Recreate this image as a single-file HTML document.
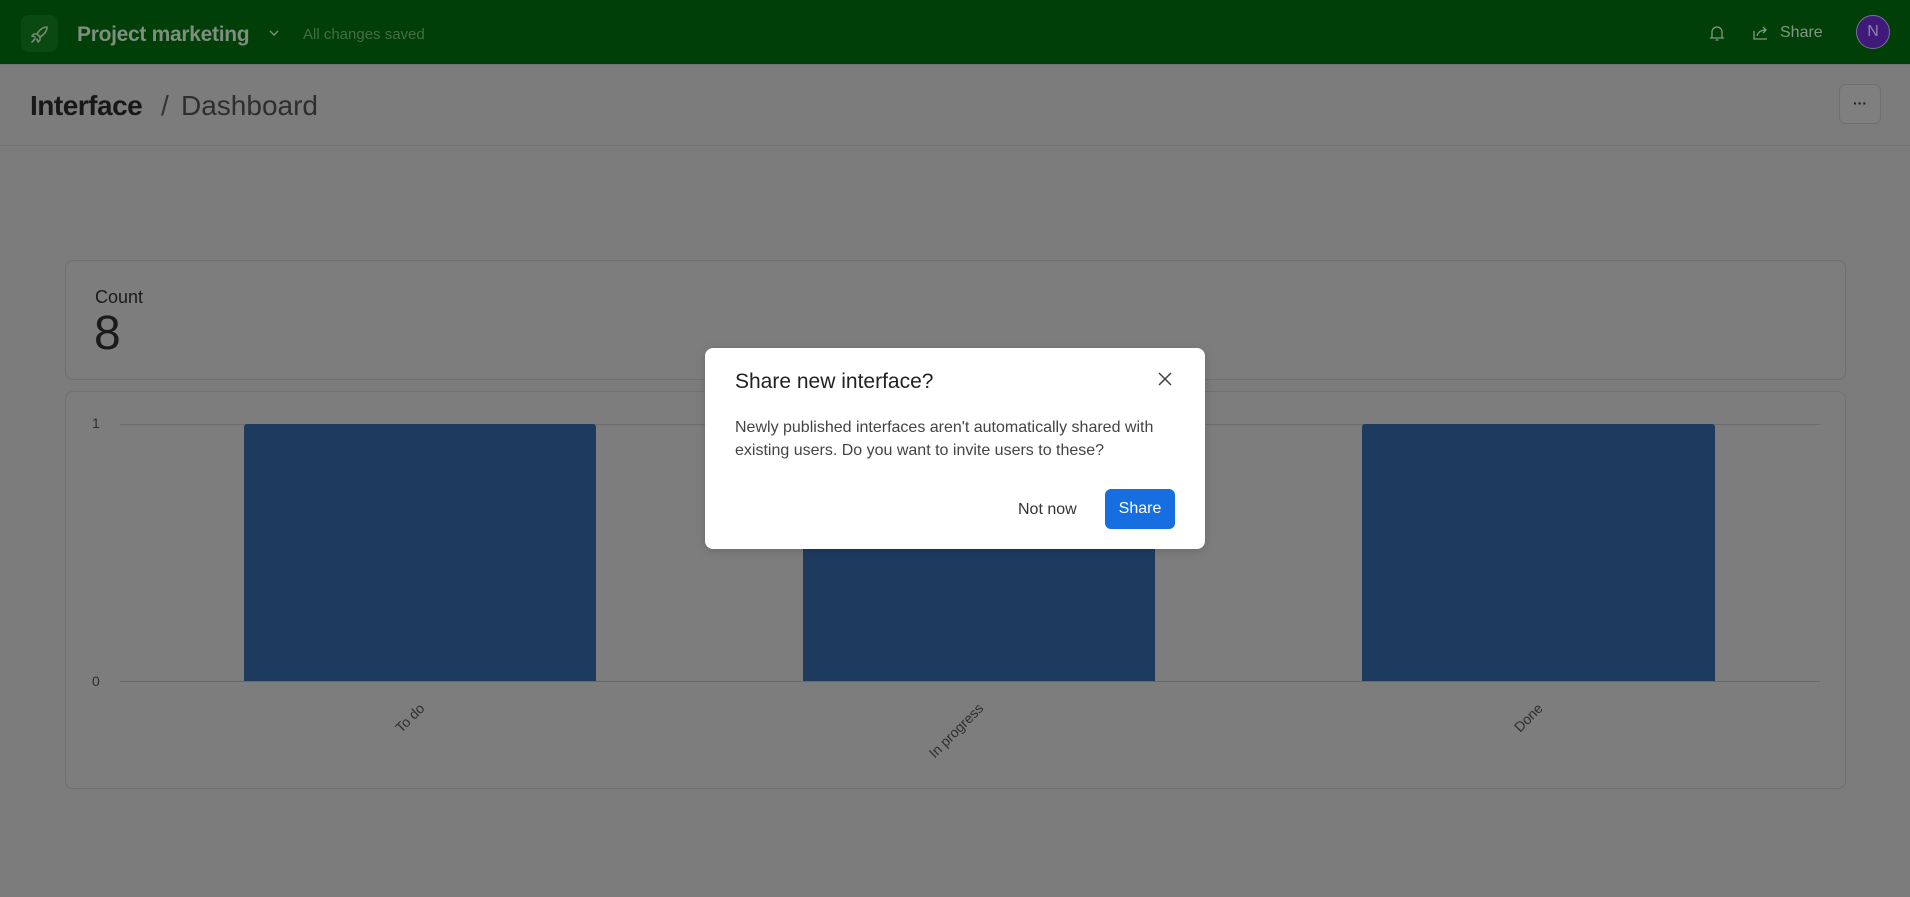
<!DOCTYPE html>
<html><head><meta charset="utf-8"><style>
*{box-sizing:border-box;margin:0;padding:0}
body{width:1910px;height:897px;overflow:hidden;background:#7c7c7c;font-family:"Liberation Sans",sans-serif;position:relative}
.abs{position:absolute}
#hdr{left:0;top:0;width:1910px;height:64px;background:#003f07}
.card{border:1px solid #707070;border-radius:8px;background:#7d7d7d}
</style></head><body>
<div id="hdr" class="abs">
  <div class="abs" style="left:21px;top:15px;width:37px;height:37px;border-radius:8px;background:#0b4912"></div>
  <svg class="abs" style="left:28px;top:22px" width="24" height="24" viewBox="0 0 24 24" fill="none" stroke="#728c72" stroke-width="1.6" stroke-linecap="round" stroke-linejoin="round"><path d="M19 5c-4 0-8 3-10 7l3 3c4-2 7-6 7-10z"/><path d="M9 12l-3 0-2 2 3 1M12 15v3l-2 2-1-3"/><path d="M7 17l-3 3"/></svg>
  <div class="abs" style="left:77px;top:23px;font-size:21px;font-weight:bold;color:#7f8e7f;letter-spacing:-0.3px">Project marketing</div>
  <svg class="abs" style="left:268px;top:29px" width="12" height="8" viewBox="0 0 12 8" fill="none" stroke="#7f8e7f" stroke-width="1.4"><path d="M2 2l4 4 4-4"/></svg>
  <div class="abs" style="left:303px;top:26px;font-size:15px;color:#456d45">All changes saved</div>
  <svg class="abs" style="left:1709px;top:24px" width="16" height="18" viewBox="0 0 16 18" fill="none" stroke="#839883" stroke-width="1.3"><path d="M3 13V8a5 5 0 0110 0v5l1 1H2l1-1zM6.5 16h3"/></svg>
  <svg class="abs" style="left:1753px;top:25px" width="18" height="16" viewBox="0 0 18 16" fill="none" stroke="#839883" stroke-width="1.3"><path d="M1 6v8h13"/><path d="M4 11c1-4 4-6 9-6M10 2l3 3-3 3"/></svg>
  <div class="abs" style="left:1780px;top:24px;font-size:16px;color:#839883">Share</div>
  <div class="abs" style="left:1856px;top:15px;width:34px;height:34px;border-radius:50%;background:#3f1a7a;border:1.5px solid #7d6e9a;color:#8e83ab;font-size:16px;text-align:center;line-height:31px">N</div>
</div>
<div class="abs" style="left:0;top:64px;width:1910px;height:1px;background:#727272"></div>
<div class="abs" style="left:30px;top:90px;font-size:28px;color:#181818;font-weight:bold;letter-spacing:-0.5px">Interface</div>
<div class="abs" style="left:161px;top:90px;font-size:28px;color:#333">/</div>
<div class="abs" style="left:181px;top:90px;font-size:28px;color:#2e2e2e">Dashboard</div>
<div class="abs" style="left:1839px;top:84px;width:42px;height:40px;border:1px solid #707070;border-radius:7px;background:#7f7f7f;text-align:center;line-height:36px;font-size:14px;color:#1a1a1a;font-weight:bold">···</div>
<div class="abs" style="left:0;top:145px;width:1910px;height:1px;background:#727272"></div>

<div class="abs card" style="left:65px;top:260px;width:1781px;height:120px"></div>
<div class="abs" style="left:95px;top:287px;font-size:18px;color:#1a1a1a">Count</div>
<div class="abs" style="left:94px;top:306px;font-size:48px;color:#1a1a1a">8</div>

<div class="abs card" style="left:65px;top:391px;width:1781px;height:398px"></div>
<div class="abs" style="left:92px;top:415px;font-size:14px;color:#2e2e2e">1</div>
<div class="abs" style="left:92px;top:673px;font-size:14px;color:#2e2e2e">0</div>
<div class="abs" style="left:120px;top:424px;width:1700px;height:1px;background:#6c6c6c"></div>
<div class="abs" style="left:120px;top:681px;width:1700px;height:1px;background:#696969"></div>
<div class="abs" style="left:244px;top:424px;width:352px;height:257px;background:#1d3b5e;border-radius:3px 3px 0 0"></div>
<div class="abs" style="left:803px;top:424px;width:352px;height:257px;background:#1d3b5e;border-radius:3px 3px 0 0"></div>
<div class="abs" style="left:1362px;top:424px;width:353px;height:257px;background:#1d3b5e;border-radius:3px 3px 0 0"></div>
<div class="abs" style="right:1494px;top:700px;font-size:14px;color:#2e2e2e;transform:rotate(-45deg);transform-origin:right top;white-space:nowrap">To do</div>
<div class="abs" style="right:935px;top:700px;font-size:14px;color:#2e2e2e;transform:rotate(-45deg);transform-origin:right top;white-space:nowrap">In progress</div>
<div class="abs" style="right:376px;top:700px;font-size:14px;color:#2e2e2e;transform:rotate(-45deg);transform-origin:right top;white-space:nowrap">Done</div>

<div class="abs" style="left:705px;top:348px;width:500px;height:201px;background:#fff;border-radius:8px;box-shadow:0 2px 10px rgba(0,0,0,.15)">
  <div class="abs" style="left:30px;top:22px;font-size:21px;color:#222">Share new interface?</div>
  <svg class="abs" style="left:453px;top:24px" width="14" height="14" viewBox="0 0 14 14" stroke="#444" stroke-width="1.5"><path d="M1 1l12 12M13 1L1 13"/></svg>
  <div class="abs" style="left:30px;top:68px;width:460px;font-size:16px;line-height:23px;color:#444">Newly published interfaces aren't automatically shared with existing users. Do you want to invite users to these?</div>
  <div class="abs" style="left:313px;top:153px;font-size:16px;color:#333">Not now</div>
  <div class="abs" style="left:400px;top:141px;width:70px;height:40px;background:#166ee1;border-radius:6px;color:#fff;font-size:16px;text-align:center;line-height:40px">Share</div>
</div>
</body></html>
